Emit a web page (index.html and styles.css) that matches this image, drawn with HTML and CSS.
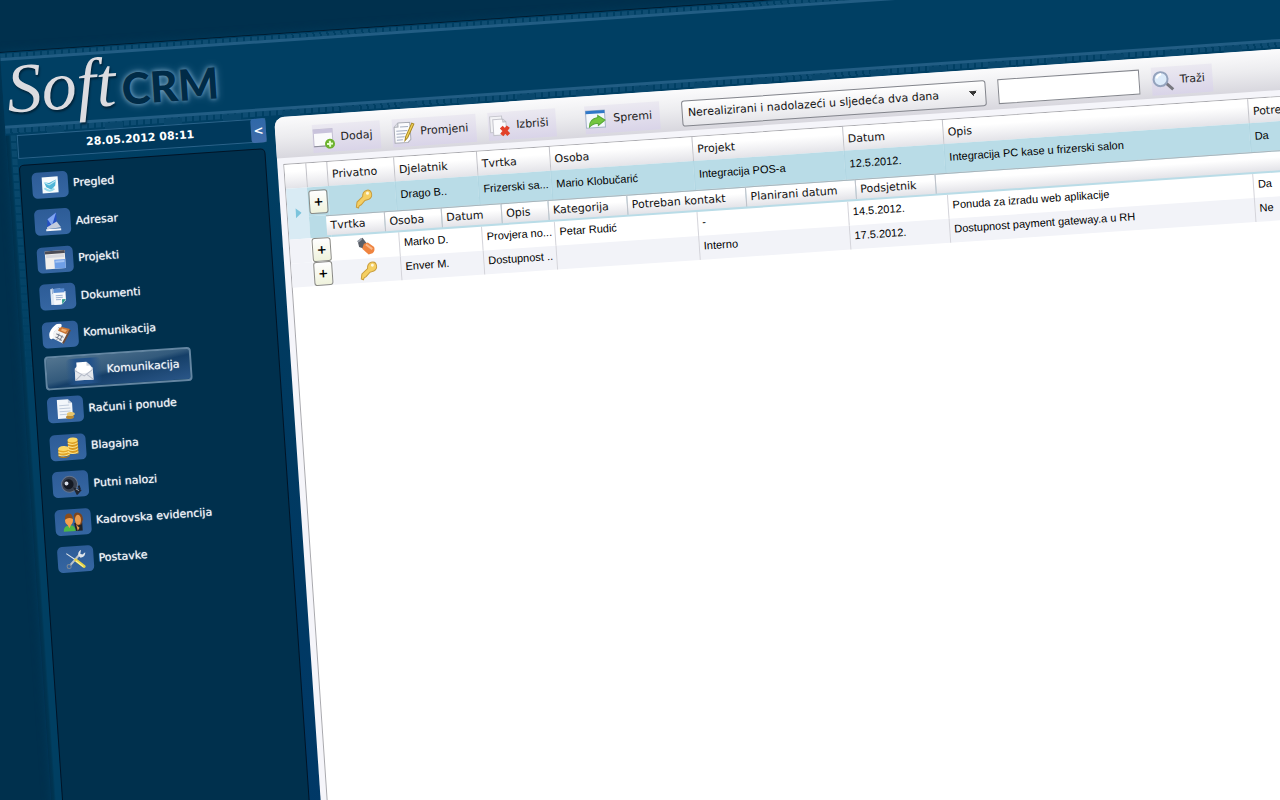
FILE: index.html
```html
<!DOCTYPE html>
<html lang="hr">
<head>
    <meta charset="UTF-8">
    <title>Soft CRM - Komunikacija</title>
    <link rel="stylesheet" href="styles.css">
</head>
<body>
    <div class="page">
        <!-- Header -->
        <header class="header">
            <h1 class="logo"><span class="logo-soft">Soft</span><span class="logo-crm">CRM</span></h1>
        </header>

        <!-- Sidebar -->
        <aside class="sidebar">
            <div class="date-box">
                <span class="date-text">28.05.2012 08:11</span>
                <button class="collapse" type="button">&lt;</button>
            </div>
            <nav class="menu">
                <ul class="menu-list">
                    <li><a class="menu-item" href="#"><span class="menu-icon"><svg width="18" height="18" viewBox="0 0 18 18"><rect x="1" y="1" width="16" height="16" fill="#f6fbfd"/><path d="M3 6l5 1 7-3-1 6-4 4-5-3z" fill="#4fb6d8"/><path d="M3 6l5 3 7-4" stroke="#bfe9f5" fill="none"/><path d="M3 12q5 5 10 1" stroke="#9bdcec" stroke-width="2" fill="none"/></svg></span>Pregled</a></li>
                    <li><a class="menu-item" href="#"><span class="menu-icon"><svg width="20" height="20" viewBox="0 0 20 20"><path d="M5 7l9-6v11l-10 4z" fill="#2450c4"/><path d="M5 7l9-6-5 13z" fill="#7fa4ee"/><path d="M4 15l10-5 4 6-14 1z" fill="#c4ccdc"/><path d="M3 17h15v2H3z" fill="#f4f6fa"/></svg></span>Adresar</a></li>
                    <li><a class="menu-item" href="#"><span class="menu-icon"><svg width="22" height="20" viewBox="0 0 22 20"><rect x="1" y="1" width="20" height="18" fill="#f1efec"/><rect x="1" y="1" width="20" height="3" fill="#4c4c55"/><rect x="2" y="5" width="18" height="3" fill="#d7d9df"/><rect x="10" y="10" width="11" height="9" fill="#6f9fe6"/><rect x="11" y="11" width="9" height="2" fill="#a5c4f2"/></svg></span>Projekti</a></li>
                    <li><a class="menu-item" href="#"><span class="menu-icon"><svg width="18" height="20" viewBox="0 0 18 20"><rect x="2" y="2" width="10" height="16" fill="#dfe9f5"/><path d="M5 5h12v9l-4 4H5z" fill="#f6f8fb"/><path d="M5 2h11v4H5z" fill="#5b8ed2"/><path d="M13 18v-5h4z" fill="#2f9c8c"/><path d="M4 1v6M7 9h7M7 11h7M7 13h5" stroke="#9fb4d2"/></svg></span>Dokumenti</a></li>
                    <li><a class="menu-item" href="#"><span class="menu-icon"><svg width="24" height="22" viewBox="0 0 24 22"><path d="M9 4l13 3-8 13-12-7z" fill="#f3f3f3"/><path d="M12 3l10 3-4 5-8-4z" fill="#c87434"/><path d="M14 5l5 2-2 2-4-2z" fill="#f0b070"/><path d="M3 13Q2 9 6 5T12 2" stroke="#fff" stroke-width="4" fill="none" stroke-linecap="round"/><path d="M8 10l7 4M7 13l6 4M11 10l-3 6M14 12l-3 5" stroke="#777d8a"/><path d="M22 7l-8 13" stroke="#6b4a38" stroke-width="2"/></svg></span>Komunikacija</a></li>
                    <li><a class="menu-item selected" href="#"><span class="menu-icon"><svg width="20" height="20" viewBox="0 0 20 20"><path d="M1 7l4-4h9l5 4v12H1z" fill="#e9ebef"/><path d="M3 1h10l4 4v7H3z" fill="#fff"/><path d="M13 1v4h4z" fill="#cfd4dd"/><path d="M1 9l9 6 9-6v10H1z" fill="#e4e7ec"/><path d="M1 19l7-6M19 19l-7-6M1 9l9 6 9-6" stroke="#b5bbc8" fill="none"/></svg></span>Komunikacija</a></li>
                    <li><a class="menu-item" href="#"><span class="menu-icon"><svg width="20" height="22" viewBox="0 0 20 22"><path d="M2 1h11l4 4v15H2z" fill="#f2f6fa"/><path d="M4 7h10M4 10h11M4 13h11M4 16h7" stroke="#c0ccdc"/><path d="M13 1v4h4z" fill="#c5d0df"/><ellipse cx="14" cy="19" rx="4" ry="2" fill="#b98a34"/><ellipse cx="15" cy="16" rx="4" ry="2" fill="#e9c66c"/></svg></span>Računi i ponude</a></li>
                    <li><a class="menu-item" href="#"><span class="menu-icon"><svg width="22" height="22" viewBox="0 0 22 22"><path d="M11 4v14h10V4z" fill="#d99a1e"/><path d="M1 12v7h11v-7z" fill="#e3a628"/><path d="M11 7q5 3 10 0M11 10q5 3 10 0M11 13q5 3 10 0M11 16q5 3 10 0M1 15q6 3 11 0M1 18q6 3 11 0" stroke="#fbe28a" fill="none"/><ellipse cx="16" cy="4" rx="5" ry="2.500" fill="#fbd866"/><ellipse cx="6.500" cy="12" rx="5.500" ry="2.500" fill="#fbd866"/><path d="M1 19q6 3 11 0v1q-6 3-11 0z" fill="#b87810"/></svg></span>Blagajna</a></li>
                    <li><a class="menu-item" href="#"><span class="menu-icon"><svg width="22" height="22" viewBox="0 0 22 22"><circle cx="10" cy="11" r="8" fill="#39414f"/><circle cx="10" cy="11" r="8" fill="none" stroke="#66748c"/><circle cx="9" cy="11" r="5" fill="#141923"/><circle cx="7" cy="10" r="2" fill="#d8dee8"/><path d="M15 16l5 2-3 3zM19 13l1 4" fill="#20252f" stroke="#20252f" stroke-width="2"/><path d="M16 16l3 2" stroke="#9aa4b4"/></svg></span>Putni nalozi</a></li>
                    <li><a class="menu-item" href="#"><span class="menu-icon"><svg width="22" height="22" viewBox="0 0 22 22"><path d="M12 12h8v8h-7z" fill="#1f2326"/><path d="M12 5q1-4 5-3t4 7l-2 5-5 1z" fill="#7b4520"/><ellipse cx="16" cy="9" rx="3" ry="5" fill="#e99a4c"/><path d="M14 14l3 3-2 3z" fill="#e99a4c"/><path d="M1 20q0-6 6-6t6 6z" fill="#4db848"/><ellipse cx="7" cy="9" rx="4" ry="5" fill="#f5a04c"/><path d="M3 8q0-6 4-6t4 6q-4-3-8 0z" fill="#8a4c1c"/><path d="M5 13h4l-2 4z" fill="#f5a04c"/></svg></span>Kadrovska evidencija</a></li>
                    <li><a class="menu-item" href="#"><span class="menu-icon"><svg width="22" height="22" viewBox="0 0 22 22"><path d="M5 17L15 7" stroke="#b9c2cb" stroke-width="2"/><path d="M14 8q-1-4 3-6l-1 4 2 1 3-2q0 5-5 5z" fill="#dfe5ea"/><circle cx="4" cy="18" r="2" fill="none" stroke="#7d8994"/><path d="M2 5l9 7" stroke="#e3e7ea" stroke-width="1"/><path d="M11 12l8 7" stroke="#e6d245" stroke-width="3" stroke-linecap="round"/><path d="M11 13l7 6" stroke="#fff6a0"/></svg></span>Postavke</a></li>
                </ul>
            </nav>
        </aside>

        <!-- Main content -->
        <main class="content">
            <div class="toolbar">
                <button class="tool" type="button"><svg width="24" height="22" viewBox="0 0 24 22"><rect x="1" y="2" width="19" height="17" fill="#fafafc" stroke="#c3bfd2"/><rect x="1" y="2" width="19" height="4" fill="#c9c3dc"/><path d="M1 19h19" stroke="#8d8d99"/><circle cx="17" cy="17" r="5" fill="#6cb22e"/><path d="M17 14v6M14 17h6" stroke="#e8ffd0" stroke-width="2"/></svg>Dodaj</button>
                <button class="tool" type="button"><svg width="24" height="22" viewBox="0 0 24 22"><path d="M6 1h12v17l-3 3H2V5z" fill="#fbfbfd" stroke="#a9abb4"/><path d="M2 5h4V1" fill="#dcdde3" stroke="#a9abb4"/><path d="M8 5h8M4 9h11M4 12h9M4 15h8M4 18h6" stroke="#a3adc0"/><path d="M20 2l-7 13-1 4 3-3 7-13z" fill="#f2d35a" stroke="#a98720"/></svg>Promjeni</button>
                <button class="tool" type="button"><svg width="24" height="22" viewBox="0 0 24 22"><rect x="2" y="1" width="12" height="16" fill="#f2f2f5" stroke="#c4c4cc"/><path d="M5 4h10l3 3v13H5z" fill="#fbfbfd" stroke="#c4c4cc"/><path d="M15 4v3h3" fill="none" stroke="#b4b4bc"/><path d="M13 12l7 8M20 12l-7 8" stroke="#e2402a" stroke-width="4"/></svg>Izbriši</button>
                <button class="tool tool-save" type="button"><svg width="24" height="22" viewBox="0 0 24 22"><rect x="1" y="2" width="19" height="17" fill="#f4f8fc" stroke="#a6b4c6"/><rect x="1" y="2" width="19" height="3" fill="#2f78c8"/><path d="M4 18q0-8 9-9V7l7 5-7 5v-2q-5-1-9 3z" fill="#74c63e" stroke="#58a838"/></svg>Spremi</button>
                <select class="filter" aria-label="Filter">
                    <option>Nerealizirani i nadolazeći u sljedeća dva dana</option>
                </select>
                <input class="search" type="text" aria-label="Traži">
                <button class="tool" type="button"><svg width="24" height="22" viewBox="0 0 24 22"><path d="M14 13l7 7" stroke="#77777f" stroke-width="3"/><circle cx="9" cy="9" r="7" fill="#dcebfa" stroke="#94a3bd" stroke-width="2"/><path d="M5 8q1-3 5-4" stroke="#fff" stroke-width="2" fill="none"/></svg>Traži</button>
            </div>

            <div class="grid-wrap">
                <table class="grid">
                    <colgroup>
                        <col class="w-small"><col class="w-small"><col class="w-private"><col class="w-worker"><col class="w-company">
                        <col class="w-person"><col class="w-project"><col class="w-date"><col class="w-desc"><col>
                    </colgroup>
                    <thead>
                        <tr>
                            <th></th><th></th><th>Privatno</th><th>Djelatnik</th><th>Tvrtka</th>
                            <th>Osoba</th><th>Projekt</th><th>Datum</th><th>Opis</th><th>Potreban kontakt</th>
                        </tr>
                    </thead>
                    <tbody>
                        <tr class="row-active">
                            <td class="indicator" rowspan="2"><svg width="6" height="10" viewBox="0 0 6 10"><path d="M0 0l6 5-6 5z" fill="#7cc4dc"/></svg></td>
                            <td class="icon-cell"><button class="expand" type="button">+</button></td>
                            <td class="icon-cell"><svg width="20" height="20" viewBox="0 0 20 20"><path d="M3 18l1-5 6-5q0-5 4-6t5 3-3 6l-4 1-4 4-2 1-1 2z" fill="#f5cf62" stroke="#c99d3c"/><circle cx="15" cy="5" r="1.500" fill="#fff8dc"/></svg></td>
                            <td>Drago B..</td><td>Frizerski sa...</td><td>Mario Klobučarić</td><td>Integracija POS-a</td>
                            <td>12.5.2012.</td><td>Integracija PC kase u frizerski salon</td><td>Da</td>
                        </tr>
                        <tr class="row-nested">
                            <td></td>
                            <td class="nested-cell" colspan="8">
                                <table class="nested">
                                    <colgroup>
                                        <col class="n-company"><col class="n-person"><col class="n-date"><col class="n-desc"><col class="n-category">
                                        <col class="n-contact"><col class="n-planned"><col class="n-reminder"><col>
                                    </colgroup>
                                    <thead>
                                        <tr>
                                            <th>Tvrtka</th><th>Osoba</th><th>Datum</th><th>Opis</th><th>Kategorija</th>
                                            <th>Potreban kontakt</th><th>Planirani datum</th><th>Podsjetnik</th><th></th>
                                        </tr>
                                    </thead>
                                </table>
                            </td>
                        </tr>
                        <tr>
                            <td class="first"></td>
                            <td class="icon-cell"><button class="expand" type="button">+</button></td>
                            <td class="icon-cell"><svg width="20" height="20" viewBox="0 0 20 20"><path d="M2 4l5-3 4 6-3 5-5-2z" fill="#5a5f68"/><path d="M2 5l4-3" stroke="#9aa0aa" stroke-width="2"/><path d="M8 7l4-1 6 5q1 4-2 6l-4 1-6-6z" fill="#ef8440"/><path d="M10 8l6 5" stroke="#f9b98c" stroke-width="2"/></svg></td>
                            <td>Marko D.</td><td>Provjera no...</td><td>Petar Rudić</td><td>-</td>
                            <td>14.5.2012.</td><td>Ponuda za izradu web aplikacije</td><td>Da</td>
                        </tr>
                        <tr class="row-alt">
                            <td class="first"></td>
                            <td class="icon-cell"><button class="expand" type="button">+</button></td>
                            <td class="icon-cell"><svg width="20" height="20" viewBox="0 0 20 20"><path d="M3 18l1-5 6-5q0-5 4-6t5 3-3 6l-4 1-4 4-2 1-1 2z" fill="#f5cf62" stroke="#c99d3c"/><circle cx="15" cy="5" r="1.500" fill="#fff8dc"/></svg></td>
                            <td>Enver M.</td><td>Dostupnost ..</td><td></td><td>Interno</td>
                            <td>17.5.2012.</td><td>Dostupnost payment gateway.a u RH</td><td>Ne</td>
                        </tr>
                    </tbody>
                </table>
            </div>
        </main>
    </div>
</body>
</html>
```
FILE: styles.css
```css
* {
    box-sizing: border-box;
}

body {
    margin: 0;
    height: 100vh;
    overflow: hidden;
    background-color: #00304d;
    font-family: "DejaVu Sans", Verdana, sans-serif;
    font-size: 11px;
}

/* The whole application is tilted */
.page {
    display: grid;
    grid-template-columns: 260px 1fr;
    grid-template-rows: 83px 1fr;
    column-gap: 9px;
    width: 103vw;
    height: 108vh;
    margin-top: 52px;
    border-top: 1px solid #001c30;
    background: linear-gradient(#003f63 0, #003f63 100px, #003a5f 300px, #003868 100%);
    box-shadow: 0 0 8px #003a5a;
    transform: rotate(-3.9deg);
    transform-origin: 0 0;
}

/* Header */
.header {
    grid-column: 1 / 3;
    padding: 0 4px;
    background:
        linear-gradient(#225d84, #225d84) 0 5px / 100% 3px no-repeat,
        linear-gradient(#225d84, #225d84) 0 73px / 100% 3px no-repeat,
        repeating-linear-gradient(to right, #0f4d72 0, #0f4d72 5px, transparent 5px, transparent 7px) 0 1px / 100% 4px no-repeat,
        repeating-linear-gradient(to right, transparent 0, transparent 41px, #09476c 41px, #09476c 59px) 0 77px / 100% 6px no-repeat,
        repeating-linear-gradient(to right, #0e4c72 0, #0e4c72 5px, transparent 5px, transparent 7px) 0 76px / 100% 5px no-repeat,
        #003f63;
}

.logo {
    display: flex;
    align-items: baseline;
    gap: 6px;
    margin: 0;
    line-height: 74px;
}

.logo-soft {
    font-family: "Liberation Serif", serif;
    font-size: 70px;
    font-style: italic;
    font-weight: normal;
    color: #dcdce0;
    text-shadow: 1px 2px 2px #00243a;
}

.logo-crm {
    font-family: Lato, sans-serif;
    font-size: 43px;
    font-weight: 900;
    color: #002b47;
    text-shadow: 0 0 4px #7ba6c4, 0 0 8px #4e83a6;
}

/* Sidebar */
.sidebar {
    display: flex;
    flex-direction: column;
    gap: 6px;
    padding-left: 11px;
    background:
        linear-gradient(transparent 0, #003f62 240px) 5px 0 / 5px 240px no-repeat,
        repeating-linear-gradient(#0b4a6e 0, #0b4a6e 6px, transparent 6px, transparent 8px) 5px 0 / 5px 240px no-repeat,
        linear-gradient(to right, #00304d 0, #003552 3px, #003f62 5px, #003f62 11px, transparent 11px);
}

.date-box {
    display: flex;
    height: 24px;
    border: 1px solid #2a648b;
    background-color: #00395c;
    color: #fff;
    font-weight: bold;
}

.date-text {
    flex: 1;
    padding-left: 10px;
    line-height: 22px;
    text-align: center;
}

.collapse {
    width: 15px;
    height: 24px;
    margin: -1px;
    padding: 0;
    border: none;
    border-radius: 3px;
    background: linear-gradient(#2f68a8, #3f6caa);
    color: #fff;
    font-family: inherit;
    font-size: 12px;
    font-weight: bold;
}

.menu {
    flex: 1;
    margin-right: 2px;
    border: 1px solid #001426;
    border-radius: 5px;
    background-color: #00304d;
}

.menu-list {
    display: flex;
    flex-direction: column;
    height: 413px;
    margin: 2px 0 0;
    padding: 0 0 0 11px;
    list-style: none;
}

.menu-list li {
    display: flex;
    flex: 1;
    align-items: center;
}

.menu-item {
    display: flex;
    align-items: center;
    gap: 5px;
    color: #f2f5f8;
    text-decoration: none;
    text-shadow: 0 0 1px #c8d4de;
}

.menu-icon {
    display: flex;
    align-items: center;
    justify-content: center;
    width: 36px;
    height: 26px;
    border-radius: 5px;
    background: linear-gradient(#2d5c97, #3566a2);
}

.menu-item.selected {
    height: 34px;
    padding: 0 10px 0 19px;
    border: 2px solid #6486a2;
    border-radius: 4px;
    background: linear-gradient(170deg, #537590 0, #335a7c 45%, #153f68 55%, #2a5688 100%);
}

.selected .menu-icon {
    background: linear-gradient(to right, transparent, #23528a 30%, #23528a 70%, transparent);
}

/* White content panel */
.content {
    border-radius: 10px 0 0 0;
    background-color: #f5f5fa;
    overflow: hidden;
}

.toolbar {
    display: flex;
    align-items: center;
    gap: 12px;
    height: 41px;
    padding: 6px 0 0 37px;
    background: linear-gradient(#fbfbfc, #ececef 50%, #d8d7de);
}

.tool {
    display: flex;
    align-items: center;
    gap: 4px;
    height: 28px;
    padding: 0 8px 0 0;
    border: none;
    background: linear-gradient(#ebe9f1, #d9d4e8);
    color: #222;
    font-family: inherit;
    font-size: 11px;
}

.tool-save {
    margin: 0 10px 0 17px;
}

.filter {
    width: 305px;
    height: 26px;
    padding: 0 5px;
    border: 1px solid #83858c;
    border-radius: 3px;
    appearance: none;
    background:
        linear-gradient(to bottom left, #333 50%, transparent 50%) right 12px center / 4px 5px no-repeat,
        linear-gradient(to bottom right, #333 50%, transparent 50%) right 8px center / 4px 5px no-repeat,
        linear-gradient(#fff, #e6e6ea);
    color: #111;
    font-family: inherit;
    font-size: 11px;
}

.search {
    width: 142px;
    height: 25px;
    border: 1px solid #85878e;
    background-color: #fff;
}

/* Data grid */
.grid-wrap {
    height: 100%;
    margin: 6px 0 0 6px;
    border: 1px solid #a9a9ae;
    background-color: #fff;
}

table {
    width: 100%;
    border-collapse: separate;
    border-spacing: 0;
    table-layout: fixed;
}

th {
    height: 24px;
    padding: 0 4px;
    border-left: 1px solid #c2c2c8;
    background: linear-gradient(#fff 30%, #e3e3e8);
    color: #111;
    font-family: "DejaVu Sans", Verdana, sans-serif;
    font-weight: normal;
    text-align: left;
    white-space: nowrap;
}

th:first-child {
    border-left: none;
}

td {
    height: 24px;
    padding: 3px 4px 0;
    border-left: 1px solid #d4d4da;
    color: #000;
    font-family: "Liberation Sans", Arial, sans-serif;
    font-size: 11px;
    line-height: 14px;
    vertical-align: top;
    white-space: nowrap;
}

.row-active td {
    height: 29px;
    padding-top: 6px;
    border-left-color: #b0d6e2;
    background-color: #b9dce7;
}

.row-nested td {
    height: 22px;
    padding: 0;
    border: none;
    background-color: #b9dce7;
}

.row-active .indicator,
td.first {
    padding: 0;
    border-left: none;
    background-color: #d9ebf4;
    text-align: center;
    vertical-align: middle;
}

td.first {
    background-color: #f2f3f8;
}

.row-alt td {
    background-color: #f2f3f8;
}

td.icon-cell,
.row-active .icon-cell {
    padding: 0;
    border-left: none;
    text-align: center;
    vertical-align: middle;
}

.icon-cell svg {
    display: block;
    margin: 0 auto;
}

.expand {
    display: block;
    width: 19px;
    height: 24px;
    margin: 0 auto;
    padding: 0;
    border: 1px solid #8b8b86;
    border-radius: 3px;
    background: linear-gradient(#fff, #eff2dc);
    color: #000;
    font-family: "DejaVu Sans", Verdana, sans-serif;
    font-size: 12px;
    font-weight: bold;
}

.nested th {
    height: 20px;
    border-top: 1px solid #a9b4ba;
}

.row-nested .nested {
    width: auto;
    min-width: 100%;
    margin-left: -4px;
}

/* Column widths */
.w-small { width: 21px; }
.w-private { width: 67px; }
.w-worker { width: 83px; }
.w-company { width: 73px; }
.w-person { width: 143px; }
.w-project { width: 151px; }
.w-date { width: 100px; }
.w-desc { width: 306px; }

.n-company { width: 58px; }
.n-person { width: 57px; }
.n-date { width: 60px; }
.n-desc { width: 47px; }
.n-category { width: 79px; }
.n-contact { width: 119px; }
.n-planned { width: 110px; }
.n-reminder { width: 80px; }
```
